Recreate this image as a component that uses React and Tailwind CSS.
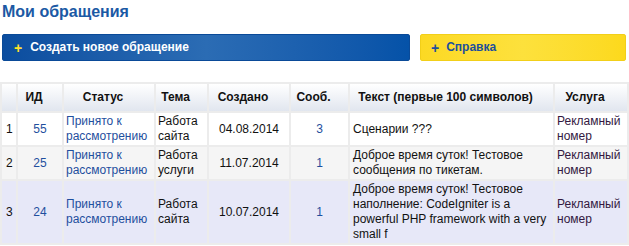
import React from "react";

const rows = [
  {
    n: 1,
    id: 55,
    status: "Принято к рассмотрению",
    topic: "Работа сайта",
    date: "04.08.2014",
    count: 3,
    text: "Сценарии ???",
    service: "Рекламный номер",
    bg: "bg-white",
  },
  {
    n: 2,
    id: 25,
    status: "Принято к рассмотрению",
    topic: "Работа услуги",
    date: "11.07.2014",
    count: 1,
    text: "Доброе время суток! Тестовое сообщения по тикетам.",
    service: "Рекламный номер",
    bg: "bg-[#f5f5f5]",
  },
  {
    n: 3,
    id: 24,
    status: "Принято к рассмотрению",
    topic: "Работа сайта",
    date: "10.07.2014",
    count: 1,
    text: "Доброе время суток! Тестовое наполнение: CodeIgniter is a powerful PHP framework with a very small f",
    service: "Рекламный номер",
    bg: "bg-[#e7e8f8]",
  },
];

const headers = ["", "ИД", "Статус", "Тема", "Создано", "Сооб.", "Текст (первые 100 символов)", "Услуга"];

const App = () => {
  return (
    <div className="w-[629px] h-[246px] bg-white overflow-hidden font-['Liberation_Sans',Arial,sans-serif] text-[12px] leading-[15px] text-[#111]">
      {/* title */}
      <h1 className="pl-[2px] pt-[3px] h-[34px] font-bold text-[16px] leading-[18px] text-[#1b59a4]">
        Мои обращения
      </h1>

      {/* buttons */}
      <div className="flex gap-[10px] pl-[2px] font-bold text-[12px]">
        <button className="flex items-center gap-[8px] w-[408px] h-[27px] pl-[11px] rounded-[2px] border border-[#0a4a98] bg-gradient-to-r from-[#0b4d9f] via-[#2b6cb4] to-[#0552a8] text-white">
          <span className="text-[14px] leading-none text-[#ffe22a]">+</span>
          <span>Создать новое обращение</span>
        </button>
        <button className="flex items-center gap-[7px] w-[206px] h-[27px] pl-[10px] rounded-[2px] border border-[#f2cf19] bg-gradient-to-r from-[#fcd923] via-[#fde13c] to-[#fcd91c] text-[#1c4f9c]">
          <span className="text-[14px] leading-none">+</span>
          <span>Справка</span>
        </button>
      </div>

      {/* table */}
      <table className="mt-[21px] w-[629px] table-fixed border-separate border-spacing-[2px] bg-[#ececec]">
        <colgroup>
          <col className="w-[14px]" />
          <col className="w-[44px]" />
          <col className="w-[90px]" />
          <col className="w-[51px]" />
          <col className="w-[80px]" />
          <col className="w-[57px]" />
          <col className="w-[203px]" />
          <col className="w-[72px]" />
        </colgroup>
        <thead>
          <tr>
            {headers.map((h, i) => (
              <th
                key={i}
                className="h-[27px] p-0 pl-[2px] pr-[14px] text-center font-bold text-[#111] bg-gradient-to-b from-white to-[#e1e6ef] whitespace-nowrap"
              >
                {h}
              </th>
            ))}
          </tr>
        </thead>
        <tbody>
          {rows.map((r) => (
            <tr key={r.n} className={r.bg}>
              <td className="py-[1px] pl-[4px] text-left">{r.n}</td>
              <td className="py-[1px] text-center text-[#1f4f9e]">{r.id}</td>
              <td className="py-[1px] pl-[2px] text-[#1f4f9e]">{r.status}</td>
              <td className="py-[1px] pl-[2px]">{r.topic}</td>
              <td className="py-[1px] text-center">{r.date}</td>
              <td className="py-[1px] text-center text-[#1f4f9e]">{r.count}</td>
              <td className="py-[1px] pl-[3px] pr-[2px]">{r.text}</td>
              <td className="py-[1px] pl-[2px] text-[#33183f]">{r.service}</td>
            </tr>
          ))}
        </tbody>
      </table>
    </div>
  );
};

export default App;
